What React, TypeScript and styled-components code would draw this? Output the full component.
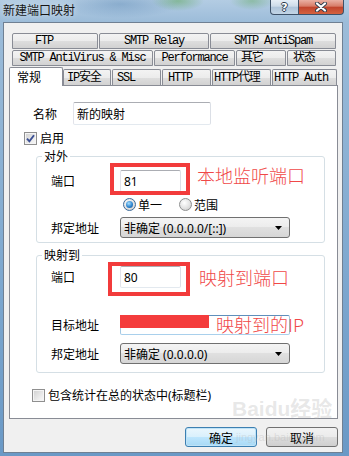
import React from 'react';
import styled, { createGlobalStyle, css } from 'styled-components';

const ui = `"Noto Sans", "Noto Sans CJK SC", sans-serif`;
const cjk = `"Noto Sans CJK SC", sans-serif`;
const mono = `"Liberation Mono", "Noto Sans CJK SC", monospace`;

const GlobalStyle = createGlobalStyle`
  html, body {
    margin: 0;
    padding: 0;
  }
  body {
    width: 349px;
    height: 456px;
    overflow: hidden;
    font-family: ${ui};
    font-size: 12px;
    color: #000;
  }
  * {
    box-sizing: border-box;
  }
`;

const Window = styled.div`
  position: relative;
  width: 349px;
  height: 456px;
  display: flex;
  flex-direction: column;
  padding: 0 6px 3px 3px;
  background:
    radial-gradient(ellipse 26px 10px at 178px 1px, rgba(96, 168, 96, 0.55), transparent),
    radial-gradient(ellipse 22px 9px at 252px 1px, rgba(96, 168, 96, 0.45), transparent),
    radial-gradient(ellipse 60px 14px at 120px 4px, rgba(70, 120, 170, 0.35), transparent),
    linear-gradient(to bottom, #b3cce3 0, #9cbcd9 22px, #7ea8cf 60%, #6a99c6 100%);
`;

const TitleBar = styled.div`
  height: 22px;
  display: flex;
  align-items: flex-start;
`;

const Title = styled.div`
  padding-top: 2px;
  line-height: 16px;
  font-family: ${cjk};
  font-size: 12px;
  color: #161616;
  text-shadow: 0 0 6px rgba(255, 255, 255, 0.7);
`;

const CaptionButtons = styled.div`
  margin-left: auto;
  margin-right: -1px;
  display: flex;
  height: 15px;
`;

const CaptionButton = styled.div<{ $w: number; $close?: boolean }>`
  width: ${(p) => p.$w}px;
  display: flex;
  align-items: center;
  justify-content: center;
  border: 1px solid #3e5168;
  border-top: none;
  background: linear-gradient(#e6eef6, #cddbe9 45%, #aec4da 50%, #c3d5e6 100%);
  border-radius: 0 0 0 4px;
  color: #fff;
  font-family: "DejaVu Sans", sans-serif;
  font-weight: bold;
  font-size: 11px;
  text-shadow: 1px 0 0 #2d3c4d, -1px 0 0 #2d3c4d, 0 1px 0 #2d3c4d, 0 -1px 0 #2d3c4d;
  ${(p) =>
    p.$close &&
    css`
      border-left: none;
      border-radius: 0 0 4px 0;
      background: linear-gradient(#eab0a3, #d77b67 45%, #c0432c 50%, #d5623f 100%);
    `}
`;

const Body = styled.div`
  flex: 1;
  display: flex;
  flex-direction: column;
  background: #f0f0f0;
  border: 1px solid #6f8093;
  padding: 10px 4px 5px 5px;
`;

const TabRows = styled.div`
  display: flex;
  flex-direction: column;
  gap: 1px;
`;

const TabRow = styled.div<{ $front?: boolean }>`
  display: flex;
  gap: 1px;
  align-items: flex-end;
  height: ${(p) => (p.$front ? 18 : 16)}px;
  padding-left: ${(p) => (p.$front ? 0 : 3)}px;
`;

const Tab = styled.div<{ $w: number; $pl?: number; $active?: boolean; $front?: boolean }>`
  width: ${(p) => p.$w}px;
  height: 16px;
  flex: none;
  display: flex;
  align-items: center;
  justify-content: ${(p) => (p.$pl !== undefined ? 'flex-start' : 'center')};
  padding-left: ${(p) => p.$pl ?? 0}px;
  border: 1px solid #898c95;
  border-radius: 2px 2px 0 0;
  background: linear-gradient(#f3f3f3, #ececec 50%, #dedede 50%, #d2d2d2);
  font-family: ${mono};
  font-size: 12px;
  letter-spacing: -1.2px;
  line-height: 14px;
  white-space: nowrap;
  overflow: hidden;
  ${(p) =>
    p.$front &&
    css`
      border-bottom: none;
    `}
  ${(p) =>
    p.$active &&
    css`
      position: relative;
      z-index: 1;
      height: 19px;
      margin-bottom: -1px;
      margin-right: -1px;
      border-bottom: none;
      background: #fff;
      font-family: ${cjk};
      letter-spacing: 0;
    `}
`;

const Panel = styled.div`
  flex: 1;
  display: flex;
  flex-direction: column;
  background: #fff;
  border: 1px solid #898c95;
`;

const Row = styled.div<{ $mt: number; $ml?: number }>`
  display: flex;
  align-items: center;
  margin-top: ${(p) => p.$mt}px;
  margin-left: ${(p) => p.$ml ?? 0}px;
`;

const Label = styled.div<{ $w: number }>`
  width: ${(p) => p.$w}px;
  flex: none;
  font-family: ${cjk};
  font-size: 12px;
  line-height: 16px;
`;

const TextBox = styled.div<{ $w: number; $h: number; $focus?: boolean }>`
  width: ${(p) => p.$w}px;
  height: ${(p) => p.$h}px;
  display: flex;
  align-items: center;
  padding-left: 3px;
  border: 1px solid;
  border-color: #abadb3 #dbdfe6 #e3e9ef #e2e3ea;
  border-radius: 2px;
  background: #fff;
  font-family: ${ui};
  font-size: 12px;
  ${(p) =>
    p.$focus &&
    css`
      border-color: #5f8fbc #a4c9e3 #a9d0ec #a4c9e3;
    `}
`;

const FieldWrap = styled.div`
  position: relative;
  flex: none;
`;

const RedFrame = styled.div<{ $l: number; $t: number; $w: number; $h: number }>`
  position: absolute;
  left: ${(p) => p.$l}px;
  top: ${(p) => p.$t}px;
  width: ${(p) => p.$w}px;
  height: ${(p) => p.$h}px;
  border: 4px solid #f23b3b;
`;

const Redaction = styled.div`
  position: absolute;
  left: 0;
  top: 0;
  width: 89px;
  height: 13px;
  background: #f43c3c;
`;

const Note = styled.div<{ $ml?: number; $lift?: number }>`
  margin-left: ${(p) => p.$ml ?? 0}px;
  margin-top: ${(p) => -(p.$lift ?? 0) * 2}px;
  font-family: "Noto Sans CJK SC", sans-serif;
  font-weight: 300;
  font-size: 18px;
  line-height: 20px;
  color: #f04848;
  white-space: nowrap;
`;

const OverNote = styled(Note)`
  position: absolute;
  left: 96px;
  top: -1px;
`;

const CheckRow = styled.label<{ $mt: number; $ml: number }>`
  display: flex;
  align-items: center;
  gap: 3px;
  height: 13px;
  margin-top: ${(p) => p.$mt}px;
  margin-left: ${(p) => p.$ml}px;
  font-family: ${ui};
  font-size: 12px;
  line-height: 16px;
`;

const CheckBox = styled.span`
  width: 13px;
  height: 13px;
  flex: none;
  display: flex;
  align-items: center;
  justify-content: center;
  border: 1px solid #8f8f8f;
  box-shadow: inset 0 0 0 1px #f4f4f4;
  background: linear-gradient(135deg, #cfcfcf, #eeeeee 70%, #f8f8f8);
`;

const Group = styled.fieldset<{ $mt: number }>`
  margin: ${(p) => p.$mt}px 0 0 26px;
  width: 289px;
  padding: 0;
  border: 1px solid #d5dfe5;
  border-radius: 3px;
  min-width: 0;
`;

const Legend = styled.legend`
  margin-left: 5px;
  padding: 0 2px;
  font-family: ${cjk};
  font-size: 12px;
  line-height: 16px;
`;

const GroupInner = styled.div<{ $pb: number }>`
  display: flex;
  flex-direction: column;
  padding: 0 0 ${(p) => p.$pb}px 14px;
`;

const RadioRow = styled.div`
  display: flex;
  align-items: center;
  height: 13px;
  margin: 6px 0 0 72px;
  gap: 17px;
`;

const RadioItem = styled.span`
  display: flex;
  align-items: center;
  gap: 2px;
  font-family: ${cjk};
  font-size: 12px;
`;

const Radio = styled.span<{ $on?: boolean }>`
  width: 13px;
  height: 13px;
  flex: none;
  display: flex;
  align-items: center;
  justify-content: center;
  border-radius: 50%;
  border: 1px solid ${(p) => (p.$on ? '#3c6a98' : '#8e8f8f')};
  background: radial-gradient(circle at 40% 35%, #ffffff, #e2e2e2 55%, #c4c4c4);
  &::after {
    content: '';
    width: 7px;
    height: 7px;
    border-radius: 50%;
    display: ${(p) => (p.$on ? 'block' : 'none')};
    background: radial-gradient(circle at 40% 35%, #a8e0ff, #2f86d0 55%, #184f8c);
  }
`;

const Select = styled.div<{ $w: number }>`
  width: ${(p) => p.$w}px;
  height: 21px;
  flex: none;
  display: flex;
  align-items: center;
  justify-content: space-between;
  padding: 0 7px 0 3px;
  border: 1px solid #707070;
  border-radius: 3px;
  background: linear-gradient(#f4f4f4, #ececec 50%, #e0e0e0 50%, #d6d6d6);
  font-family: ${ui};
  font-size: 12px;
  white-space: nowrap;
`;

const ButtonRow = styled.div`
  display: flex;
  justify-content: flex-end;
  gap: 9px;
  margin-top: 8px;
`;

const Button = styled.div<{ $primary?: boolean }>`
  width: 72px;
  height: 20px;
  display: flex;
  align-items: center;
  justify-content: center;
  border: 1px solid #707070;
  border-radius: 3px;
  background: linear-gradient(#f2f2f2, #ebebeb 50%, #dddddd 50%, #cfcfcf);
  font-family: ${cjk};
  font-size: 12px;
  ${(p) =>
    p.$primary &&
    css`
      border-color: #3c7fb1;
      box-shadow: inset 0 0 0 1px #bfe3f7;
      background: linear-gradient(#eaf6fd, #d9f0fc 50%, #bee6fd 50%, #a7d9f5);
    `}
`;

const Watermark = styled.div`
  position: absolute;
  left: 232px;
  top: 397px;
  display: flex;
  flex-direction: column;
  align-items: flex-start;
  color: rgba(175, 175, 175, 0.3);
  font-family: "Liberation Sans", "Noto Sans CJK SC", sans-serif;
  pointer-events: none;
`;

const WatermarkBig = styled.span`
  font-size: 21px;
  font-weight: bold;
  line-height: 24px;
`;

const WatermarkSmall = styled.span`
  font-size: 11px;
  line-height: 14px;
  margin: 9px 0 0 4px;
`;

const Check = () => (
  <svg width="9" height="9" viewBox="0 0 9 9">
    <path d="M1 4.6 L3.4 7.3 L8 1.2" fill="none" stroke="#3b4f93" strokeWidth="1.9" />
  </svg>
);

const Arrow = () => (
  <svg width="7" height="4" viewBox="0 0 7 4">
    <path d="M0 0 H7 L3.5 4 Z" fill="#000" />
  </svg>
);

const CloseGlyph = () => (
  <svg width="14" height="10" viewBox="0 0 14 10">
    <path d="M3 1.5 L11 8.5 M11 1.5 L3 8.5" stroke="#2d3c4d" strokeWidth="4" strokeLinecap="round" />
    <path d="M3 1.5 L11 8.5 M11 1.5 L3 8.5" stroke="#fff" strokeWidth="2.2" strokeLinecap="round" />
  </svg>
);

export default function App() {
  return (
    <Window>
      <GlobalStyle />
      <TitleBar>
        <Title>新建端口映射</Title>
        <CaptionButtons>
          <CaptionButton $w={29}>?</CaptionButton>
          <CaptionButton $w={45} $close>
            <CloseGlyph />
          </CaptionButton>
        </CaptionButtons>
      </TitleBar>
      <Body>
        <TabRows>
          <TabRow>
            <Tab $w={86} $pl={22}>FTP</Tab>
            <Tab $w={110}>SMTP Relay</Tab>
            <Tab $w={126}>SMTP AntiSpam</Tab>
          </TabRow>
          <TabRow>
            <Tab $w={141}>SMTP AntiVirus &amp; Misc</Tab>
            <Tab $w={81}>Performance</Tab>
            <Tab $w={50} $pl={4}>其它</Tab>
            <Tab $w={49} $pl={5}>状态</Tab>
          </TabRow>
          <TabRow $front>
            <Tab $w={54} $pl={7} $active>常规</Tab>
            <Tab $w={48} $pl={3} $front>IP安全</Tab>
            <Tab $w={49} $pl={4} $front>SSL</Tab>
            <Tab $w={49} $pl={5} $front>HTTP</Tab>
            <Tab $w={59} $pl={1} $front>HTTP代理</Tab>
            <Tab $w={65} $pl={1} $front>HTTP Auth</Tab>
          </TabRow>
        </TabRows>
        <Panel>
          <Row $mt={16} $ml={23}>
            <Label $w={40}>名称</Label>
            <TextBox $w={138} $h={23}>新的映射</TextBox>
          </Row>
          <CheckRow $mt={7} $ml={14}>
            <CheckBox>
              <Check />
            </CheckBox>
            启用
          </CheckRow>

          <Group $mt={3}>
            <Legend>对外</Legend>
            <GroupInner $pb={4}>
              <Row $mt={6}>
                <Label $w={69}>端口</Label>
                <FieldWrap>
                  <TextBox $w={61} $h={22}>81</TextBox>
                  <RedFrame $l={-10} $t={-7} $w={80} $h={32} />
                </FieldWrap>
                <Note $ml={16} $lift={6}>本地监听端口</Note>
              </Row>
              <RadioRow>
                <RadioItem>
                  <Radio $on />
                  单一
                </RadioItem>
                <RadioItem>
                  <Radio />
                  范围
                </RadioItem>
              </RadioRow>
              <Row $mt={6}>
                <Label $w={69}>邦定地址</Label>
                <Select $w={170}>
                  <span>非确定 (0.0.0.0/[::])</span>
                  <Arrow />
                </Select>
              </Row>
            </GroupInner>
          </Group>

          <Group $mt={4}>
            <Legend>映射到</Legend>
            <GroupInner $pb={8}>
              <Row $mt={3}>
                <Label $w={69}>端口</Label>
                <FieldWrap>
                  <TextBox $w={61} $h={22}>80</TextBox>
                  <RedFrame $l={-12} $t={-4} $w={82} $h={34} />
                </FieldWrap>
                <Note $ml={18}>映射到端口</Note>
              </Row>
              <Row $mt={27}>
                <Label $w={69}>目标地址</Label>
                <FieldWrap>
                  <TextBox $w={170} $h={20} $focus />
                  <Redaction />
                  <OverNote>映射到的IP</OverNote>
                </FieldWrap>
              </Row>
              <Row $mt={8}>
                <Label $w={69}>邦定地址</Label>
                <Select $w={170}>
                  <span>非确定 (0.0.0.0)</span>
                  <Arrow />
                </Select>
              </Row>
            </GroupInner>
          </Group>

          <CheckRow $mt={16} $ml={22}>
            <CheckBox />
            包含统计在总的状态中(标题栏)
          </CheckRow>
        </Panel>
        <ButtonRow>
          <Button $primary>确定</Button>
          <Button>取消</Button>
        </ButtonRow>
      </Body>
      <Watermark>
        <WatermarkBig>Baidu经验</WatermarkBig>
        <WatermarkSmall>jingyan.baidu.com</WatermarkSmall>
      </Watermark>
    </Window>
  );
}
